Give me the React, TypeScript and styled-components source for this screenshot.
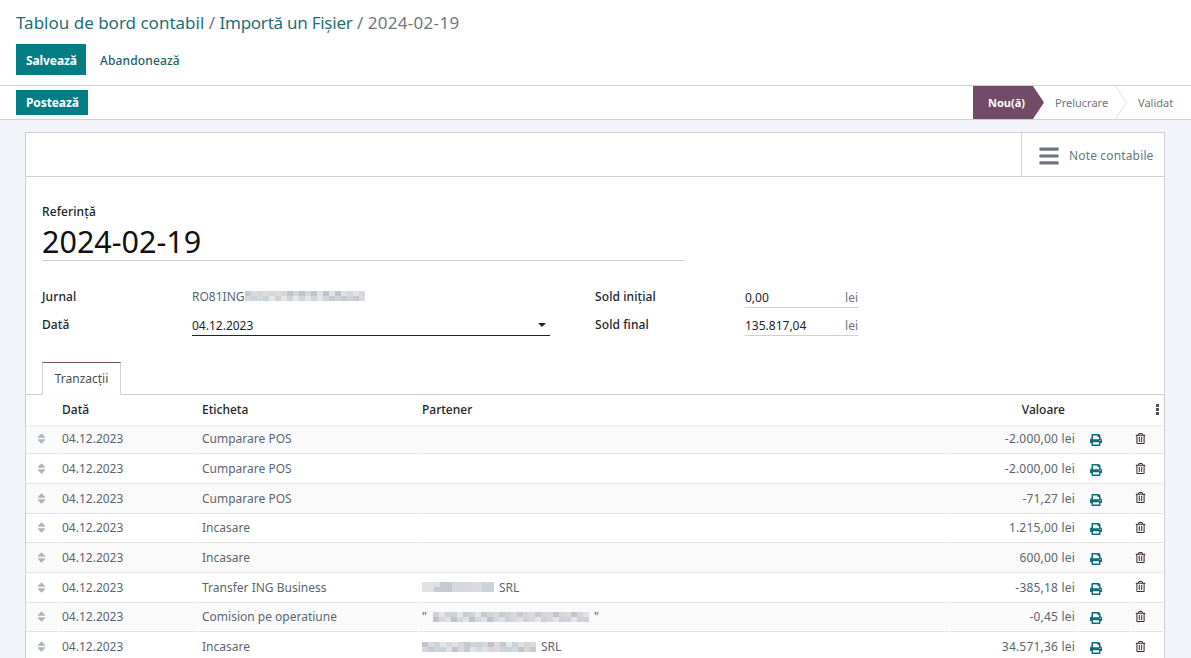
import React from 'react';
import styled, { createGlobalStyle } from 'styled-components';
import { FaBars, FaPrint, FaRegTrashAlt, FaSort } from 'react-icons/fa';

const GlobalStyle = createGlobalStyle`
  html, body {
    margin: 0;
    padding: 0;
    height: 100%;
    overflow: hidden;
    background: #f3f4f9;
    font-family: 'Noto Sans', 'Open Sans', sans-serif;
    font-size: 12px;
    color: #495057;
  }
  * { box-sizing: border-box; }
`;

const Page = styled.div`
  height: 658px;
  overflow: hidden;
  display: flex;
  flex-direction: column;
`;

const ControlPanel = styled.header`
  height: 86px;
  flex: none;
  background: #fff;
  border-bottom: 1px solid #ced0d6;
  padding: 11px 16px 0;
`;

const Breadcrumb = styled.div`
  font-size: 17px;
  line-height: 23px;
  height: 33px;
  color: #6f7780;
`;

const Crumb = styled.span<{ $tight?: boolean }>`
  color: #1f6f76;
  letter-spacing: ${p => (p.$tight ? '-0.25px' : '0')};
`;

const CurrentCrumb = styled.span`
  letter-spacing: 0.3px;
`;

const Actions = styled.div`
  display: flex;
  align-items: center;

  button {
    padding-top: 1px;
  }
`;

const PrimaryButton = styled.button<{ $h: number }>`
  height: ${p => p.$h}px;
  padding: 0 9px 0 10px;
  border: 0;
  border-radius: 0;
  background: #017e84;
  color: #fff;
  font: 700 12px 'Noto Sans', sans-serif;
  letter-spacing: -0.1px;
`;

const LinkButton = styled.button`
  border: 0;
  background: none;
  padding: 0 14px;
  color: #1d5f66;
  font: 500 12px 'Noto Sans', sans-serif;
  letter-spacing: 0.15px;
`;

const StatusBar = styled.div`
  height: 34px;
  flex: none;
  background: #fff;
  border-bottom: 1px solid #ced0d6;
  padding-left: 16px;
  display: flex;
  align-items: center;
  justify-content: space-between;
`;

const Steps = styled.div`
  display: flex;
  align-items: stretch;
  height: 33px;
  font-size: 11px;
`;

const ActiveStep = styled.div`
  width: 71px;
  background: #714b67;
  color: #fff;
  font-weight: 700;
  display: flex;
  align-items: center;
  padding-left: 15px;
  clip-path: polygon(0 0, 60px 0, 71px 50%, 60px 100%, 0 100%);
`;

const Step = styled.div<{ $w: number; $pl: number }>`
  width: ${p => p.$w}px;
  padding-left: ${p => p.$pl}px;
  color: #6c757d;
  display: flex;
  align-items: center;
  position: relative;
`;

const Chevron = styled.svg`
  position: absolute;
  right: 0;
  top: 0;
`;

const Content = styled.main`
  flex: 1;
  padding: 12px 26px 0 25px;
  min-height: 0;
`;

const Sheet = styled.section`
  background: #fff;
  border: 1px solid #ced0d6;
  border-bottom: 0;
  height: 540px;
`;

const ButtonBox = styled.div`
  height: 44px;
  border-bottom: 1px solid #ced0d6;
  display: flex;
  justify-content: flex-end;
`;

const StatButton = styled.div`
  width: 143px;
  border-left: 1px solid #ced0d6;
  display: flex;
  align-items: center;
  gap: 9px;
  padding: 2px 0 0 16px;
  font-size: 12px;
  letter-spacing: 0.15px;
  color: #6c757d;
`;

const BarsIcon = styled(FaBars)`
  font-size: 22px;
  color: #6c757d;
`;

const FormArea = styled.div`
  padding: 26px 16px 0;
`;

const FieldLabel = styled.div`
  font-size: 12px;
  line-height: 17px;
  font-weight: 500;
  letter-spacing: 0.1px;
  color: #212529;
`;

const TitleInput = styled.div`
  width: 643px;
  height: 40px;
  margin-top: 1px;
  border-bottom: 1px solid #ced0d6;
  font-size: 30.5px;
  line-height: 41px;
  color: #111;
`;

const Columns = styled.div`
  display: flex;
  margin-top: 21px;
`;

const GroupLeft = styled.div`
  width: 553px;
  display: grid;
  grid-template-columns: 150px 358px;
  grid-auto-rows: 28px;
  align-items: center;
`;

const GroupRight = styled.div`
  display: grid;
  grid-template-columns: 150px 113px;
  grid-auto-rows: 28px;
  align-items: center;
`;

const PlainValue = styled.div`
  display: flex;
  align-items: center;
  font-size: 12px;
  color: #5b6670;
`;

const SelectField = styled.div`
  height: 21px;
  margin-top: 3px;
  border-bottom: 1px solid #212529;
  color: #212529;
  display: flex;
  align-items: center;
  justify-content: space-between;
  padding-right: 4px;
`;

const Caret = styled.span`
  width: 0;
  height: 0;
  border-left: 4px solid transparent;
  border-right: 4px solid transparent;
  border-top: 4px solid #212529;
`;

const MoneyField = styled.div`
  height: 21px;
  margin-top: 3px;
  border-bottom: 1px solid #ced0d6;
  color: #212529;
  display: flex;
  align-items: center;
  justify-content: space-between;
`;

const Currency = styled.span`
  color: #6c757d;
`;

const TabBar = styled.div`
  margin-top: 24px;
  padding-left: 16px;
  height: 33px;
  border-bottom: 1px solid #ced0d6;
`;

const Tab = styled.div`
  width: 79px;
  height: 33px;
  background: #fff;
  border: 1px solid #ced0d6;
  border-top-color: #714b67;
  border-bottom-color: #fff;
  display: flex;
  align-items: center;
  justify-content: center;
  color: #495057;
`;

const gridCols = '33px 140px 220px 1fr 129px 52px 33px';

const HeadRow = styled.div`
  display: grid;
  grid-template-columns: ${gridCols};
  height: 29.6px;
  align-items: center;
  font-weight: 500;
  color: #212529;
  box-shadow: 0 1px 3px rgba(0, 0, 0, 0.07);
  position: relative;
`;

const HeadCell = styled.div<{ $right?: boolean }>`
  padding: 0 ${p => (p.$right ? '14px' : '3px')} 0 3px;
  text-align: ${p => (p.$right ? 'right' : 'left')};
  position: relative;
`;

const Kebab = styled.span`
  position: absolute;
  top: -6px;
  right: 5px;
  width: 3px;
  height: 11px;
  background: repeating-linear-gradient(#4b5058 0 3px, transparent 3px 4px);
`;

const Row = styled.div<{ $odd: boolean }>`
  display: grid;
  grid-template-columns: ${gridCols};
  height: 29.67px;
  background: ${p => (p.$odd ? '#fafafa' : '#fff')};
`;

const Cell = styled.div<{ $right?: boolean; $center?: boolean }>`
  padding: 0 3px;
  margin-right: 1px;
  border-bottom: 1px solid #e3e3e8;
  display: flex;
  align-items: center;
  justify-content: ${p => (p.$center ? 'center' : p.$right ? 'flex-end' : 'flex-start')};
  letter-spacing: ${p => (p.$right ? '0.2px' : '0')};
  color: #5b6670;
  white-space: nowrap;
  overflow: hidden;
`;

const DragHandle = styled(FaSort)`
  color: #adb5bd;
  font-size: 13px;
  margin-right: 2px;
`;

const PrintIcon = styled(FaPrint)`
  color: #0e6e78;
  font-size: 12px;
  margin: 3px 0 0 8px;
`;

const TrashIcon = styled(FaRegTrashAlt)`
  color: #3f2a3a;
  font-size: 11px;
  margin: -1px 14px 0 0;
`;

const Smudge = styled.span`
  display: inline-grid;
  grid-auto-flow: column;
  grid-template-rows: repeat(2, 5px);
  grid-auto-columns: 6px;
  vertical-align: middle;
`;

const SmudgeDot = styled.i`
  display: block;
`;

const tints = ['#d5d8dd', '#c6c9d2', '#dfe1e4', '#cfd2d6', '#bfc3cc', '#e4e5e8', '#d9d5d4', '#c9d3da', '#dcd8df'];

const Blur = ({ w, seed = 1 }: { w: number; seed?: number }) => {
  const count = Math.round(w / 6) * 2;
  return (
    <Smudge>
      {Array.from({ length: count }, (_, i) => (
        <SmudgeDot key={i} style={{ background: tints[(i * 7 + seed * (i % 5) + seed) % tints.length] }} />
      ))}
    </Smudge>
  );
};

const PartnerText = styled.span`
  margin-left: 5px;
`;

const OpenQuote = styled.span`
  margin-right: 6px;
`;

type Line = { label: string; partner?: React.ReactNode; value: string };

const lines: Line[] = [
  { label: 'Cumparare POS', value: '-2.000,00 lei' },
  { label: 'Cumparare POS', value: '-2.000,00 lei' },
  { label: 'Cumparare POS', value: '-71,27 lei' },
  { label: 'Incasare', value: '1.215,00 lei' },
  { label: 'Incasare', value: '600,00 lei' },
  {
    label: 'Transfer ING Business',
    partner: (
      <>
        <Blur w={72} seed={2} />
        <PartnerText>SRL</PartnerText>
      </>
    ),
    value: '-385,18 lei',
  },
  {
    label: 'Comision pe operatiune',
    partner: (
      <>
        <OpenQuote>"</OpenQuote>
        <Blur w={156} seed={3} />
        <PartnerText>"</PartnerText>
      </>
    ),
    value: '-0,45 lei',
  },
  {
    label: 'Incasare',
    partner: (
      <>
        <Blur w={114} seed={4} />
        <PartnerText>SRL</PartnerText>
      </>
    ),
    value: '34.571,36 lei',
  },
];

export default function App() {
  return (
    <Page>
      <GlobalStyle />
      <ControlPanel>
        <Breadcrumb>
          <Crumb>Tablou de bord contabil</Crumb> / <Crumb $tight>Importă un Fișier</Crumb> /{' '}
          <CurrentCrumb>2024-02-19</CurrentCrumb>
        </Breadcrumb>
        <Actions>
          <PrimaryButton $h={31}>Salvează</PrimaryButton>
          <LinkButton>Abandonează</LinkButton>
        </Actions>
      </ControlPanel>

      <StatusBar>
        <PrimaryButton $h={25}>Postează</PrimaryButton>
        <Steps>
          <ActiveStep>Nou(ă)</ActiveStep>
          <Step $w={83} $pl={11}>
            Prelucrare
            <Chevron width="12" height="33" viewBox="0 0 12 33">
              <path d="M0.5 0 L11 16.5 L0.5 33" fill="none" stroke="#dcdee1" />
            </Chevron>
          </Step>
          <Step $w={64} $pl={11}>Validat</Step>
        </Steps>
      </StatusBar>

      <Content>
        <Sheet>
          <ButtonBox>
            <StatButton>
              <BarsIcon />
              Note contabile
            </StatButton>
          </ButtonBox>

          <FormArea>
            <FieldLabel>Referință</FieldLabel>
            <TitleInput>2024-02-19</TitleInput>
            <Columns>
              <GroupLeft>
                <FieldLabel>Jurnal</FieldLabel>
                <PlainValue>
                  RO81ING
                  <Blur w={120} seed={1} />
                </PlainValue>
                <FieldLabel>Dată</FieldLabel>
                <SelectField>
                  04.12.2023
                  <Caret />
                </SelectField>
              </GroupLeft>
              <GroupRight>
                <FieldLabel>Sold inițial</FieldLabel>
                <MoneyField>
                  0,00
                  <Currency>lei</Currency>
                </MoneyField>
                <FieldLabel>Sold final</FieldLabel>
                <MoneyField>
                  135.817,04
                  <Currency>lei</Currency>
                </MoneyField>
              </GroupRight>
            </Columns>
          </FormArea>

          <TabBar>
            <Tab>Tranzacții</Tab>
          </TabBar>

          <HeadRow>
            <HeadCell />
            <HeadCell>Dată</HeadCell>
            <HeadCell>Eticheta</HeadCell>
            <HeadCell>Partener</HeadCell>
            <HeadCell $right>Valoare</HeadCell>
            <HeadCell />
            <HeadCell>
              <Kebab />
            </HeadCell>
          </HeadRow>

          {lines.map((line, i) => (
            <Row key={i} $odd={i % 2 === 0}>
              <Cell $center>
                <DragHandle />
              </Cell>
              <Cell>04.12.2023</Cell>
              <Cell>{line.label}</Cell>
              <Cell>{line.partner}</Cell>
              <Cell $right>{line.value}</Cell>
              <Cell>
                <PrintIcon />
              </Cell>
              <Cell $right>
                <TrashIcon />
              </Cell>
            </Row>
          ))}
        </Sheet>
      </Content>
    </Page>
  );
}
